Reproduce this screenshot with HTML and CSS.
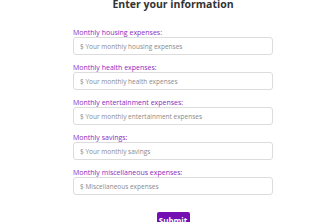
FILE: index.html
```html
<!DOCTYPE html>
<html lang="en">
<head>
    <meta charset="UTF-8">
    <meta name="viewport" content="width=device-width, initial-scale=1.0">
    <title>Enter your information</title>
    <link rel="stylesheet" href="styles.css">
</head>
<body>
    <div class="form-container">
        <h2>Enter your information</h2>
        <form>
            <div class="field">
                <label for="housing">Monthly housing expenses:</label>
                <input type="text" id="housing" placeholder="$ Your monthly housing expenses">
            </div>
            <div class="field">
                <label for="health">Monthly health expenses:</label>
                <input type="text" id="health" placeholder="$ Your monthly health expenses">
            </div>
            <div class="field">
                <label for="entertainment">Monthly entertainment expenses:</label>
                <input type="text" id="entertainment" placeholder="$ Your monthly entertainment expenses">
            </div>
            <div class="field">
                <label for="savings">Monthly savings:</label>
                <input type="text" id="savings" placeholder="$ Your monthly savings">
            </div>
            <div class="field">
                <label for="misc">Monthly miscellaneous expenses:</label>
                <input type="text" id="misc" placeholder="$ Miscellaneous expenses">
            </div>
            <div class="actions">
                <button type="button">Submit</button>
            </div>
        </form>
    </div>
</body>
</html>
```

FILE: styles.css
```css
body {
    font-family: "Open Sans", Arial, sans-serif;
    background-color: #fff;
    margin: 0;
    overflow: hidden;
}

.form-container {
    width: 200px;
    margin-left: 73px;
}

.form-container h2 {
    margin: -2px 0 0;
    font-size: 10.5px;
    line-height: 13px;
    font-weight: 700;
    color: #333;
    text-align: center;
}

form {
    display: flex;
    flex-direction: column;
    gap: 8px;
    margin-top: 17px;
}

.field {
    display: flex;
    flex-direction: column;
}

.field label {
    font-size: 7px;
    line-height: 9px;
    color: #8a2bc2;
}

.field input {
    box-sizing: border-box;
    width: 200px;
    height: 18px;
    padding: 0 6px;
    font-family: inherit;
    font-size: 6.5px;
    border: 1px solid #dcdcdc;
    border-radius: 3px;
    outline: none;
}

.field input::placeholder {
    color: #8a8a8a;
}

.actions {
    display: flex;
    justify-content: center;
    margin-top: 9px;
}

.actions button {
    width: 33px;
    height: 16px;
    padding: 0;
    font-family: inherit;
    font-size: 8px;
    font-weight: 700;
    color: #fff;
    background-color: #7410b3;
    border: none;
    border-radius: 2px;
    cursor: pointer;
}
```
